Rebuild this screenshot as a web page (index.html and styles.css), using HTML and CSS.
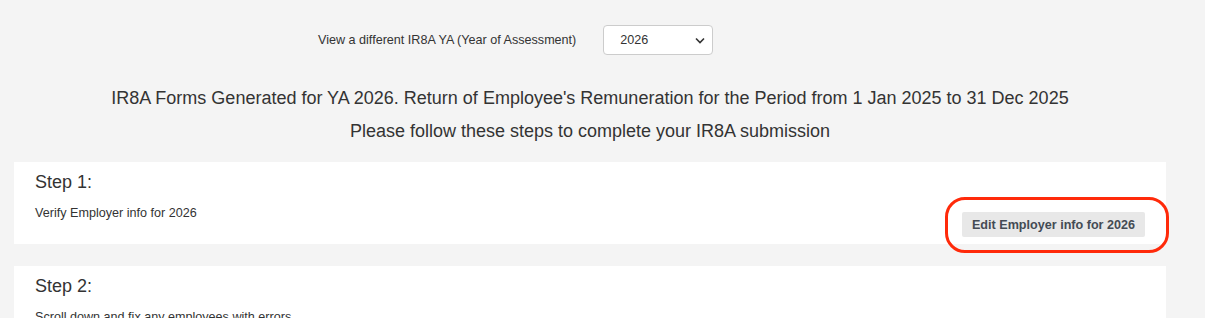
FILE: index.html
```html
<!DOCTYPE html>
<html lang="en">
<head>
    <meta charset="UTF-8">
    <meta name="viewport" content="width=device-width, initial-scale=1.0">
    <title>IR8A Submission</title>
    <link rel="stylesheet" href="styles.css">
</head>
<body>

<div class="page">

  <!-- Year picker -->
  <div class="ya-row">
    <label class="ya-label" for="yaSelect">View a different IR8A YA (Year of Assessment)</label>
    <div class="ya-select">
      <span>2026</span>
      <svg width="10" height="7" viewBox="0 0 10 7"><path d="M1 1.5 L5 5.5 L9 1.5" fill="none" stroke="#333" stroke-width="1.6"/></svg>
    </div>
  </div>

  <!-- Headings -->
  <h3 class="title">IR8A Forms Generated for YA 2026. Return of Employee's Remuneration for the Period from 1 Jan 2025 to 31 Dec 2025</h3>
  <h3 class="subtitle">Please follow these steps to complete your IR8A submission</h3>

  <!-- Step 1 -->
  <div class="step-card">
    <h4 class="step-title">Step 1:</h4>
    <div class="step-row">
      <p class="step-text">Verify Employer info for 2026</p>
      <div class="btn-wrap">
        <button class="btn">Edit Employer info for 2026</button>
        <span class="highlight"></span>
      </div>
    </div>
  </div>

  <!-- Step 2 -->
  <div class="step-card">
    <h4 class="step-title">Step 2:</h4>
    <div class="step-row">
      <p class="step-text">Scroll down and fix any employees with errors</p>
    </div>
  </div>

</div>

</body>
</html>
```

FILE: styles.css
```css
html, body {
  margin: 0;
  background: #f4f4f4;
  font-family: 'Liberation Sans', Arial, sans-serif;
  color: #333;
}

.page {
  width: 1152px;
  margin-left: 14px;
}

/* Year picker */
.ya-row {
  display: flex;
  align-items: center;
  gap: 27px;
  padding: 25px 0 0 304px;
}
.ya-label {
  font-size: 12.6px;
  color: #333;
}
.ya-select {
  width: 110px;
  height: 30px;
  box-sizing: border-box;
  display: flex;
  align-items: center;
  justify-content: space-between;
  padding: 0 7px 0 16px;
  background: #fff;
  border: 1px solid #ccc;
  border-radius: 4px;
  font-size: 12.6px;
}

/* Headings */
.title, .subtitle {
  margin: 0;
  text-align: center;
  font-weight: normal;
  font-size: 18px;
}
.title {
  margin-top: 33px;
}
.subtitle {
  margin-top: 12px;
}

/* Steps */
.step-card {
  background: #fff;
  padding: 10px 21px 0 21px;
  margin-top: 22px;
}
.title + .subtitle + .step-card {
  margin-top: 20px;
}
.step-title {
  margin: 0;
  font-size: 18px;
  font-weight: normal;
}
.step-row {
  display: flex;
  justify-content: space-between;
  align-items: flex-start;
  padding-bottom: 7px;
}
.step-text {
  margin: 13px 0 0 0;
  font-size: 12.6px;
}
.btn-wrap {
  position: relative;
  margin-top: 19px;
}
.btn {
  display: block;
  border: none;
  border-radius: 2px;
  background: #e8e8e8;
  color: #444b54;
  font-family: 'Liberation Sans', Arial, sans-serif;
  font-weight: bold;
  font-size: 12.6px;
  height: 25px;
  width: 183px;
  padding: 0;
}
.highlight {
  position: absolute;
  left: -17px;
  top: -15px;
  right: -24px;
  bottom: -16px;
  border: 3px solid #ff2a0a;
  border-radius: 20px;
  pointer-events: none;
}
```
